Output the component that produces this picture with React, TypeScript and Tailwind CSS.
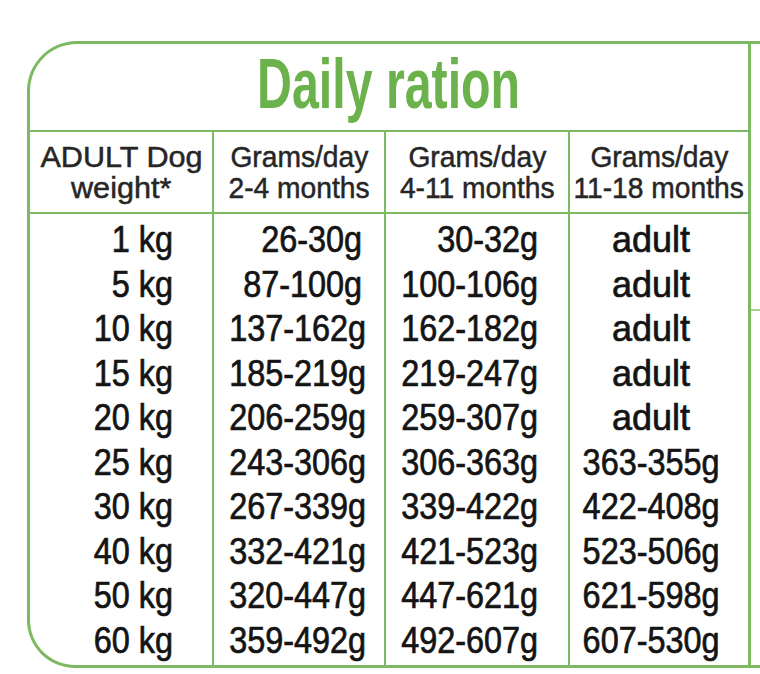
const rows: [string, string, string, string][] = [
  ["1 kg", "26-30g", "30-32g", "adult"],
  ["5 kg", "87-100g", "100-106g", "adult"],
  ["10 kg", "137-162g", "162-182g", "adult"],
  ["15 kg", "185-219g", "219-247g", "adult"],
  ["20 kg", "206-259g", "259-307g", "adult"],
  ["25 kg", "243-306g", "306-363g", "363-355g"],
  ["30 kg", "267-339g", "339-422g", "422-408g"],
  ["40 kg", "332-421g", "421-523g", "523-506g"],
  ["50 kg", "320-447g", "447-621g", "621-598g"],
  ["60 kg", "359-492g", "492-607g", "607-530g"],
];

function HeaderCell({ l1, l2, last, wide }: { l1: string; l2: string; last?: boolean; wide?: boolean }) {
  const s = wide ? "inline-block scale-x-[1.02] whitespace-nowrap" : "inline-block scale-x-[0.94] whitespace-nowrap";
  return (
    <div
      className={
        "flex flex-col items-center justify-center text-[30px] leading-[31px] text-[#262626] [-webkit-text-stroke-width:0.5px] " +
        (last ? "" : "border-r-2 border-[#7db862]")
      }
    >
      <span className={s}>{l1}</span>
      <span className={s}>{l2}</span>
    </div>
  );
}

export default function App() {
  return (
    <div className="w-[760px] h-[674px] bg-white overflow-hidden pt-[41px] pl-[27px] font-['Liberation_Sans',Arial,sans-serif]">
      <div className="flex w-[800px] h-[627px] border-t-[3px] border-l-[3px] border-b-[3px] border-[#7db862] rounded-tl-[50px] rounded-bl-[48px]">
        <div className="w-[721px] shrink-0 border-r-[3px] border-[#7db862] flex flex-col">
          <div className="h-[88px] shrink-0 border-b-2 border-[#7db862] flex justify-center pt-[5px]">
            <span className="inline-block text-[70px] leading-[70px] font-bold text-[#6cb24c] scale-x-[0.69] whitespace-nowrap">
              Daily ration
            </span>
          </div>
          <div className="grid grid-cols-[184px_172px_184px_178px] h-[82px] shrink-0 border-b-2 border-[#7db862]">
            <HeaderCell l1="ADULT Dog" l2="weight*" wide />
            <HeaderCell l1="Grams/day" l2="2-4 months" />
            <HeaderCell l1="Grams/day" l2="4-11 months" />
            <HeaderCell l1="Grams/day" l2="11-18 months" last />
          </div>
          <div className="grid grid-cols-[184px_172px_184px_178px] flex-1 text-[36px] leading-[44.5px] text-[#141414] [-webkit-text-stroke-width:0.7px]">
            <div className="border-r-2 border-[#7db862] pt-[4px] pr-[39px] text-right">
              {rows.map((r) => (
                <div key={r[0]}>
                  <span className="inline-block scale-x-[0.9] origin-right whitespace-nowrap">{r[0]}</span>
                </div>
              ))}
            </div>
            <div className="border-r-2 border-[#7db862] pt-[4px] pr-[22px] text-right">
              {rows.map((r) => (
                <div key={r[0]}>
                  <span className="inline-block scale-x-[0.9] origin-right whitespace-nowrap">{r[1]}</span>
                </div>
              ))}
            </div>
            <div className="border-r-2 border-[#7db862] pt-[4px] pr-[30px] text-right">
              {rows.map((r) => (
                <div key={r[0]}>
                  <span className="inline-block scale-x-[0.9] origin-right whitespace-nowrap">{r[2]}</span>
                </div>
              ))}
            </div>
            <div className="pt-[4px] pr-[16px] text-center">
              {rows.map((r) => (
                <div key={r[0]}>
                  {r[3] === "adult" ? (
                    <span className="inline-block whitespace-nowrap">{r[3]}</span>
                  ) : (
                    <span className="inline-block scale-x-[0.9] whitespace-nowrap">{r[3]}</span>
                  )}
                </div>
              ))}
            </div>
          </div>
        </div>
        <div className="flex-1">
          <div className="mt-[265px] border-t-2 border-[#a9d196]" />
        </div>
      </div>
    </div>
  );
}
